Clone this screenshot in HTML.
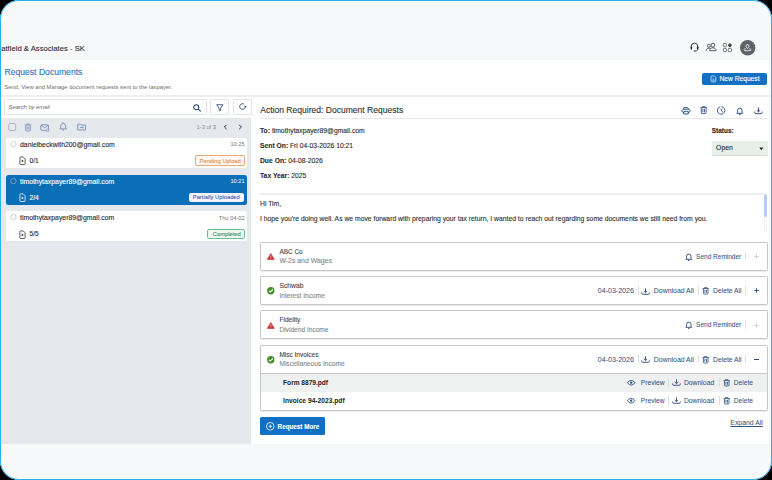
<!DOCTYPE html>
<html><head><meta charset="utf-8">
<style>
*{box-sizing:border-box;margin:0;padding:0}
html,body{width:772px;height:480px;overflow:hidden;background:#000}
body{font-family:"Liberation Sans",sans-serif;color:#2b2b2b;position:relative}
#frame{position:absolute;left:0;top:0;width:772px;height:480px;border-radius:19px;overflow:hidden;background:#f7f8fa}
#bord{position:absolute;left:0;top:0;width:772px;height:480px;border:1.5px solid #27b3e6;border-radius:19px;z-index:10}
.a{position:absolute}
.t{position:absolute;white-space:nowrap;line-height:1;-webkit-text-stroke:0.12px currentColor}
svg{position:absolute;overflow:visible}
</style></head>
<body>
<div id="frame">
<div class="t" style="left:1.2px;top:45.00px;font-size:7.7px;color:#333">atfield &amp; Associates - SK</div>
<svg style="left:689.5px;top:42px" width="10" height="10" viewBox="0 0 10 10"><path d="M1.2 6V4.4a3.3 3.3 0 0 1 6.6 0V6" fill="none" stroke="#222" stroke-width="0.85"/><rect x="0.6" y="4.6" width="1.5" height="3" rx="0.6" fill="#222"/><rect x="6.9" y="4.6" width="1.5" height="3" rx="0.6" fill="#222"/><path d="M7.7 7.4c0 1-.9 1.6-2.7 1.6" fill="none" stroke="#222" stroke-width="0.75"/><rect x="3.6" y="8.4" width="1.8" height="1.2" rx="0.5" fill="#222"/></svg>
<svg style="left:705px;top:41px" width="12" height="11" viewBox="0 0 12 11"><circle cx="3.9" cy="4.8" r="1.55" fill="none" stroke="#444" stroke-width="0.85"/><circle cx="7.9" cy="4.1" r="1.9" fill="none" stroke="#444" stroke-width="0.85"/><path d="M1.1 9.8c0-1.6 1.2-2.6 2.8-2.6.7 0 1.2.2 1.6.5" fill="none" stroke="#444" stroke-width="0.85"/><path d="M4.7 9.7c0-1.9 1.4-3 3.2-3s3.2 1.1 3.2 3z" fill="none" stroke="#444" stroke-width="0.85" stroke-linejoin="round"/></svg>
<svg style="left:722px;top:42px" width="11" height="11" viewBox="0 0 11 11"><rect x="1.3" y="1.5" width="3.2" height="3.2" rx="0.9" fill="none" stroke="#555" stroke-width="0.85"/><rect x="1.3" y="6.4" width="3.2" height="3.2" rx="0.9" fill="none" stroke="#555" stroke-width="0.85"/><rect x="6.3" y="6.4" width="3.2" height="3.2" rx="0.9" fill="none" stroke="#555" stroke-width="0.85"/><path d="M7.9 1.2l1.3.7.7 1.3-.7 1.3-1.3.7-1.3-.7-.7-1.3.7-1.3z" fill="#444"/></svg>
<svg style="left:739.9px;top:39.7px" width="15.4" height="15.4" viewBox="0 0 15.4 15.4"><circle cx="7.7" cy="7.7" r="7.7" fill="#5f6368"/><path d="M7.5 8.6C6.6 7.6 6 6.9 6 6.1a1.5 1.5 0 0 1 3 0c0 .8-.6 1.5-1.5 2.5z" fill="none" stroke="#fff" stroke-width="0.8"/><path d="M5.6 8.7c-1 .3-1.7.7-1.7 1.2 0 .5 1.6 .9 3.6 .9s3.6-.4 3.6-.9c0-.5-.7-.9-1.7-1.2" fill="none" stroke="#fff" stroke-width="0.8"/></svg>
<div class="a" style="left:0px;top:60px;width:772px;height:384px;background:#fff"></div>
<div class="t" style="left:4.5px;top:68.00px;font-size:8.6px;color:#2a78c2">Request Documents</div>
<div class="t" style="left:4.5px;top:85.00px;font-size:5.8px;color:#6b6b6b;-webkit-text-stroke:0">Send, View and Manage document requests sent to the taxpayer.</div>
<div class="a" style="left:0px;top:94.5px;width:772px;height:2px;background:#eceef1"></div>
<div class="a" style="left:702.2px;top:72.5px;width:64.8px;height:12.2px;background:#116fc4;border-radius:2px"></div>
<svg style="left:709.8px;top:75.3px" width="7" height="7.5" viewBox="0 0 7 7.5"><path d="M1.9 0.9h2.3l1.6 1.6v3.4c0 .5-.4.9-.9.9H1.9c-.5 0-.9-.4-.9-.9V1.8c0-.5.4-.9.9-.9z" fill="none" stroke="#e8f1fa" stroke-width="0.75" stroke-linejoin="round"/><path d="M2.4 4.1h2.2M2.4 5.3h2.2" stroke="#e8f1fa" stroke-width="0.6"/></svg>
<div class="t" style="left:719.4px;top:76.00px;font-size:6.7px;color:#fff">New Request</div>
<div class="a" style="left:4px;top:99px;width:203px;height:15.6px;border:1px solid #e1e5ea;background:#fff;border-radius:1px"></div>
<div class="t" style="left:8.6px;top:105.00px;font-size:5.75px;font-style:italic;color:#6a6a6a;-webkit-text-stroke:0">Search by email</div>
<svg style="left:192.5px;top:103.8px" width="10" height="8" viewBox="0 0 10 8"><circle cx="3.3" cy="3.2" r="2.5" fill="none" stroke="#1f3f6e" stroke-width="1.05"/><path d="M5.2 5.1l2.6 2.2" stroke="#1f3f6e" stroke-width="1.1"/></svg>
<div class="a" style="left:210.2px;top:99px;width:18.5px;height:15.5px;border:1px solid #e1e5ea;background:#fff;border-radius:1px"></div>
<svg style="left:216px;top:104px" width="8" height="8" viewBox="0 0 8 8"><path d="M0.7 0.7h6.2L4.5 4.3v2.2l-.7 .6-.7-.6V4.3z" fill="none" stroke="#1f3f6e" stroke-width="0.8" stroke-linejoin="round"/></svg>
<div class="a" style="left:233px;top:99px;width:18.6px;height:15.5px;border:1px solid #e1e5ea;background:#fff;border-radius:1px"></div>
<svg style="left:238.8px;top:103.3px" width="8" height="8" viewBox="0 0 8 8"><path d="M4.9 1.1A2.8 2.8 0 1 0 6.3 3.6" fill="none" stroke="#1f3f6e" stroke-width="0.85"/><path d="M5.1 3.1h2.4L6.3 4.6z" fill="#1f3f6e"/></svg>
<div class="a" style="left:0px;top:118px;width:251.3px;height:326px;background:#e5e9ee"></div>
<svg style="left:8px;top:123px" width="9" height="8" viewBox="0 0 9 8"><rect x="0.7" y="0.5" width="7" height="7" rx="1.6" fill="none" stroke="#abb0b7" stroke-width="0.9"/></svg>
<svg style="left:24px;top:123px" width="8" height="9" viewBox="0 0 8 9"><path d="M0.7 2h6.6M2.8 2V1h2.4v1M1.6 2.2v5.1c0 .4.3.7.7.7h3.4c.4 0 .7-.3.7-.7V2.2M3.2 3.4v3.2M4.8 3.4v3.2" fill="none" stroke="#7389aa" stroke-width="0.75"/></svg>
<svg style="left:40px;top:123.5px" width="10" height="8" viewBox="0 0 10 8"><rect x="0.8" y="0.8" width="7.6" height="5.6" rx="1" fill="none" stroke="#7389aa" stroke-width="0.85"/><path d="M0.9 1.2l3.7 2.7 3.7-2.7" fill="none" stroke="#7389aa" stroke-width="0.8"/><circle cx="7.6" cy="6.4" r="1.3" fill="#e3e8ed" stroke="#7389aa" stroke-width="0.7"/></svg>
<svg style="left:58.5px;top:122.3px" width="8.5" height="9.5" viewBox="0 0 8.5 9.5"><path d="M0.9 6.9c.7-.5.9-1.1.9-1.8V3.8a2.4 2.4 0 0 1 4.8 0v1.3c0 .7.2 1.3.9 1.8z" fill="none" stroke="#7389aa" stroke-width="0.85" stroke-linejoin="round"/><path d="M4.2 0.5v.9M3.4 8.1h1.6" stroke="#7389aa" stroke-width="0.9"/></svg>
<svg style="left:76.5px;top:123px" width="9.5" height="8" viewBox="0 0 9.5 8"><path d="M0.8 1.2h2.8l.8 .9h4.1v4.9H0.8z" fill="none" stroke="#7389aa" stroke-width="0.85" stroke-linejoin="round"/><path d="M3 4.5h3.2M5 3.4l1.2 1.1L5 5.6" fill="none" stroke="#7389aa" stroke-width="0.8"/></svg>
<div class="t" style="left:196.6px;top:125.00px;font-size:5.7px;color:#8a8a8a;-webkit-text-stroke:0">1-3 of 3</div>
<svg style="left:223px;top:124.2px" width="5" height="6" viewBox="0 0 5 6"><path d="M3.6 0.8L1.4 3l2.2 2.2" fill="none" stroke="#333" stroke-width="1"/></svg>
<svg style="left:237.5px;top:124.2px" width="5" height="6" viewBox="0 0 5 6"><path d="M1.2 0.8L3.4 3 1.2 5.2" fill="none" stroke="#333" stroke-width="1"/></svg>
<div class="a" style="left:6px;top:137.7px;width:240.7px;height:30.3px;background:#fff;border-radius:2.5px"></div>
<svg style="left:10px;top:140.89999999999998px" width="7" height="7" viewBox="0 0 7 7"><circle cx="3.4" cy="3.1" r="2.7" fill="none" stroke="#c0c3c7" stroke-width="0.8"/></svg>
<div class="t" style="left:20px;top:142.00px;font-size:6.87px;color:#2e2e2e">danielbeckwith200@gmail.com</div>
<div class="t" style="right:527.4px;top:142.00px;font-size:5.7px;color:#7a7a7a;-webkit-text-stroke:0">10:25</div>
<svg style="left:19.4px;top:155.6px" width="7" height="9" viewBox="0 0 7 9"><path d="M1.6 0.9h2.6l1.9 1.9v5c0 .4-.3.7-.7.7H1.6c-.4 0-.7-.3-.7-.7V1.6c0-.4.3-.7.7-.7z" fill="none" stroke="#2e2e2e" stroke-width="0.75" stroke-linejoin="round"/><path d="M2.7 3.7l2.1 1.3-2.1 1.3z" fill="#2e2e2e"/></svg>
<div class="t" style="left:29.5px;top:158.00px;font-size:6.7px;color:#2e2e2e">0/1</div>
<div class="a" style="left:195px;top:155.2px;width:50px;height:10.6px;border:1px solid #e9a878;background:#fff7f1;border-radius:2px"></div>
<div class="t" style="right:531.2px;top:159.00px;font-size:5.8px;color:#df8e4e;-webkit-text-stroke:0.1px currentColor">Pending Upload</div>
<div class="a" style="left:6px;top:174.7px;width:240.7px;height:30.3px;background:#0b6fb7;border-radius:2.5px"></div>
<svg style="left:10px;top:177.89999999999998px" width="7" height="7" viewBox="0 0 7 7"><circle cx="3.4" cy="3.1" r="2.7" fill="none" stroke="#8fa3bf" stroke-width="0.8"/></svg>
<div class="t" style="left:20px;top:179.00px;font-size:6.87px;color:#fff">timothytaxpayer89@gmail.com</div>
<div class="t" style="right:527.4px;top:179.00px;font-size:5.7px;color:#fff;-webkit-text-stroke:0">10:21</div>
<svg style="left:19.4px;top:192.6px" width="7" height="9" viewBox="0 0 7 9"><path d="M1.6 0.9h2.6l1.9 1.9v5c0 .4-.3.7-.7.7H1.6c-.4 0-.7-.3-.7-.7V1.6c0-.4.3-.7.7-.7z" fill="none" stroke="#fff" stroke-width="0.75" stroke-linejoin="round"/><path d="M2.7 3.7l2.1 1.3-2.1 1.3z" fill="#fff"/></svg>
<div class="t" style="left:29.5px;top:195.00px;font-size:6.7px;color:#fff">2/4</div>
<div class="a" style="left:188.9px;top:192.7px;width:55.1px;height:9.3px;background:#f3f4fe;border-radius:2px"></div>
<div class="t" style="right:532.2px;top:195.00px;font-size:5.8px;color:#4a5db0;-webkit-text-stroke:0.1px currentColor">Partially Uploaded</div>
<div class="a" style="left:6px;top:211.2px;width:240.7px;height:30.3px;background:#fff;border-radius:2.5px"></div>
<svg style="left:10px;top:214.39999999999998px" width="7" height="7" viewBox="0 0 7 7"><circle cx="3.4" cy="3.1" r="2.7" fill="none" stroke="#c0c3c7" stroke-width="0.8"/></svg>
<div class="t" style="left:20px;top:215.00px;font-size:6.87px;color:#2e2e2e">timothytaxpayer89@gmail.com</div>
<div class="t" style="right:527.4px;top:216.00px;font-size:5.7px;color:#7a7a7a;-webkit-text-stroke:0">Thu 04-02</div>
<svg style="left:19.4px;top:229.6px" width="7" height="9" viewBox="0 0 7 9"><path d="M1.6 0.9h2.6l1.9 1.9v5c0 .4-.3.7-.7.7H1.6c-.4 0-.7-.3-.7-.7V1.6c0-.4.3-.7.7-.7z" fill="none" stroke="#2e2e2e" stroke-width="0.75" stroke-linejoin="round"/><path d="M2.7 3.7l2.1 1.3-2.1 1.3z" fill="#2e2e2e"/></svg>
<div class="t" style="left:29.5px;top:231.00px;font-size:6.7px;color:#2e2e2e">5/5</div>
<div class="a" style="left:207.1px;top:228.7px;width:37.9px;height:10.7px;border:1px solid #72bb8f;background:#eef7f1;border-radius:2px"></div>
<div class="t" style="right:531.2px;top:232.00px;font-size:5.8px;color:#3f8e5e;-webkit-text-stroke:0.1px currentColor">Completed</div>
<div class="t" style="left:260.2px;top:106.00px;font-size:8.55px;color:#333">Action Required: Document Requests</div>
<svg style="left:681px;top:106.8px" width="10" height="8" viewBox="0 0 10 8"><path d="M2.8 2.2V0.6h3.8l.6 .6v1M2.8 5.6H2L0.7 3.9 2 2.2h6l1.3 1.7L8 5.6h-.8M2.8 4.3h4.4v2.7H2.8z" fill="none" stroke="#2a4a7c" stroke-width="0.9" stroke-linejoin="round"/></svg>
<svg style="left:700.3px;top:106.3px" width="7.5" height="8" viewBox="0 0 7.5 8"><path d="M0.4 1.7h6.6M2.4 1.7V0.6h2.6v1.1M1.3 1.9v4.9c0 .5.3.8.8.8h3.2c.5 0 .8-.3.8-.8V1.9M2.9 3.1v3.2M4.5 3.1v3.2" fill="none" stroke="#2a4a7c" stroke-width="0.85"/></svg>
<svg style="left:717.3px;top:106px" width="9" height="9" viewBox="0 0 9 9"><path d="M3.2 0.9A3.7 3.7 0 1 0 4.5 0.8" fill="none" stroke="#2a4a7c" stroke-width="0.9"/><path d="M4.3 2.6v2.2l1.5 1.2" fill="none" stroke="#2a4a7c" stroke-width="0.9"/></svg>
<svg style="left:736.3px;top:106.5px" width="7.5" height="8.5" viewBox="0 0 7.5 8.5"><path d="M0.8 6.3h6l-.8-1V3.3a2.2 2.2 0 0 0-4.4 0v2z" fill="none" stroke="#2a4a7c" stroke-width="0.95" stroke-linejoin="round"/><path d="M3 7.4h1.6" stroke="#2a4a7c" stroke-width="1"/></svg>
<svg style="left:753.5px;top:106.8px" width="9" height="7.5" viewBox="0 0 9 7.5"><path d="M4.5 0.5v4.2M2.8 3.2l1.7 1.6 1.7-1.6" fill="none" stroke="#2a4a7c" stroke-width="0.95"/><path d="M0.8 4.6v1.1c0 .6.4 1 1 1h5.4c.6 0 1-.4 1-1V4.6" fill="none" stroke="#2a4a7c" stroke-width="0.95"/></svg>
<div class="a" style="left:260px;top:117.5px;width:507px;height:1.5px;background:#e6e8ec"></div>
<div class="t" style="left:260px;top:128.00px;font-size:6.75px;color:#2e2e2e"><b>To:</b> timothytaxpayer89@gmail.com</div>
<div class="t" style="left:260px;top:143.00px;font-size:6.75px;color:#2e2e2e"><b>Sent On:</b> Fri 04-03-2026 10:21</div>
<div class="t" style="left:260px;top:158.00px;font-size:6.75px;color:#2e2e2e"><b>Due On:</b> 04-08-2026</div>
<div class="t" style="left:260px;top:173.00px;font-size:6.75px;color:#2e2e2e"><b>Tax Year:</b> 2025</div>
<div class="t" style="left:711.8px;top:128.00px;font-size:6.45px;font-weight:bold;color:#222">Status:</div>
<div class="a" style="left:711.6px;top:140.8px;width:56.2px;height:14.8px;background:#e7efe9;border-bottom:0.8px solid #d5dbd6;border-radius:1px"></div>
<div class="t" style="left:716.1px;top:145.00px;font-size:6.8px;color:#2a2a2a">Open</div>
<svg style="left:758.8px;top:146.6px" width="5" height="4" viewBox="0 0 5 4"><path d="M0.3 0.4h4l-2 2.8z" fill="#222"/></svg>
<div class="a" style="left:260px;top:192.8px;width:503.7px;height:2.2px;background:#eceef0"></div>
<div class="t" style="left:260px;top:201.00px;font-size:6.8px;color:#333">Hi Tim,</div>
<div class="t" style="left:260px;top:216.00px;font-size:6.8px;color:#333">I hope you're doing well. As we move forward with preparing your tax return, I wanted to reach out regarding some documents we still need from you.</div>
<div class="a" style="left:763.7px;top:193.7px;width:3.2px;height:23.2px;background:#b7cef3;border-radius:2px"></div>
<div class="a" style="left:763.7px;top:217px;width:3.2px;height:14px;border:0.5px solid #f0f1f3;border-radius:2px"></div>
<div class="a" style="left:259.7px;top:241.6px;width:508.5px;height:29.2px;border:1px solid #c5c7ca;border-radius:1.5px;background:#fff;box-shadow:0 0.5px 0.8px rgba(0,0,0,.08)"></div>
<div class="a" style="left:259.7px;top:275.9px;width:508.5px;height:29.2px;border:1px solid #c5c7ca;border-radius:1.5px;background:#fff;box-shadow:0 0.5px 0.8px rgba(0,0,0,.08)"></div>
<div class="a" style="left:259.7px;top:310.3px;width:508.5px;height:29.2px;border:1px solid #c5c7ca;border-radius:1.5px;background:#fff;box-shadow:0 0.5px 0.8px rgba(0,0,0,.08)"></div>
<div class="a" style="left:259.7px;top:344.7px;width:508.5px;height:66.1px;border:1px solid #c5c7ca;border-radius:1.5px;background:#fff;box-shadow:0 0.5px 0.8px rgba(0,0,0,.08)"></div>
<div class="a" style="left:260.7px;top:372.7px;width:506.5px;height:19px;background:#eff0f0;border-top:1px solid #c5c7ca"></div>
<svg style="left:266.8px;top:253.2px" width="8" height="7" viewBox="0 0 8 7"><path d="M3.8 0.5L7.3 6.4H0.3z" fill="#c92a2a" stroke="#c92a2a" stroke-width="0.6" stroke-linejoin="round"/><path d="M3.8 2.4v2M3.8 4.9v.6" stroke="#fff" stroke-width="0.75"/></svg>
<div class="t" style="left:279.4px;top:249.00px;font-size:6.45px;color:#4a4a4a">ABC Co</div>
<div class="t" style="left:279.4px;top:258.00px;font-size:6.9px;color:#8a8a8a">W-2s and Wages</div>
<svg style="left:266.8px;top:287.4px" width="8" height="8" viewBox="0 0 8 8"><circle cx="3.8" cy="3.8" r="3.7" fill="#4a8c2a"/><path d="M1.9 3.8l1.4 1.3 2.5-2.6" fill="none" stroke="#fff" stroke-width="1.1"/></svg>
<div class="t" style="left:279.4px;top:283.00px;font-size:6.75px;color:#4a4a4a">Schwab</div>
<div class="t" style="left:279.4px;top:293.00px;font-size:6.6px;color:#8a8a8a">Interest Income</div>
<svg style="left:266.8px;top:321.90000000000003px" width="8" height="7" viewBox="0 0 8 7"><path d="M3.8 0.5L7.3 6.4H0.3z" fill="#c92a2a" stroke="#c92a2a" stroke-width="0.6" stroke-linejoin="round"/><path d="M3.8 2.4v2M3.8 4.9v.6" stroke="#fff" stroke-width="0.75"/></svg>
<div class="t" style="left:279.4px;top:317.00px;font-size:6.6px;color:#4a4a4a">Fidelity</div>
<div class="t" style="left:279.4px;top:327.00px;font-size:6.6px;color:#8a8a8a">Dividend Income</div>
<svg style="left:266.8px;top:356.2px" width="8" height="8" viewBox="0 0 8 8"><circle cx="3.8" cy="3.8" r="3.7" fill="#4a8c2a"/><path d="M1.9 3.8l1.4 1.3 2.5-2.6" fill="none" stroke="#fff" stroke-width="1.1"/></svg>
<div class="t" style="left:279.4px;top:352.00px;font-size:6.5px;color:#4a4a4a">Misc Invoices</div>
<div class="t" style="left:279.4px;top:361.00px;font-size:6.6px;color:#8a8a8a">Miscellaneous Income</div>
<svg style="left:685px;top:252.6px" width="7.5" height="8.5" viewBox="0 0 7.5 8.5"><path d="M0.8 6.3h6l-.8-1V3.3a2.2 2.2 0 0 0-4.4 0v2z" fill="none" stroke="#2a4a7c" stroke-width="0.9" stroke-linejoin="round"/><path d="M3 7.4h1.6" stroke="#2a4a7c" stroke-width="0.9"/></svg>
<div class="t" style="left:696.1px;top:254.00px;font-size:6.5px;color:#34507e;-webkit-text-stroke:0.04px currentColor">Send Reminder</div>
<div class="a" style="left:745.3px;top:251.6px;width:0.9px;height:8.8px;background:#dde1e6"></div>
<svg style="left:753px;top:253.1px" width="7" height="7" viewBox="0 0 7 7"><path d="M3.5 1.2v4.6M1.2 3.5h4.6" stroke="#c8ccd2" stroke-width="0.9"/></svg>
<div class="t" style="left:597.8px;top:287.00px;font-size:7.05px;color:#34507e;-webkit-text-stroke:0.04px currentColor">04-03-2026</div>
<div class="a" style="left:637.6px;top:285.9px;width:0.9px;height:8.8px;background:#dde1e6"></div>
<svg style="left:641.2px;top:287.59999999999997px" width="9" height="7" viewBox="0 0 9 7"><path d="M4.5 0.3v4.2M2.8 3l1.7 1.6 1.7-1.6" fill="none" stroke="#2a4a7c" stroke-width="0.9"/><path d="M0.7 4.4v.9c0 .6.4 1 1 1h5.6c.6 0 1-.4 1-1v-.9" fill="none" stroke="#2a4a7c" stroke-width="0.9"/></svg>
<div class="t" style="left:653.8px;top:288.00px;font-size:6.93px;color:#34507e;-webkit-text-stroke:0.04px currentColor">Download All</div>
<div class="a" style="left:697.5px;top:285.9px;width:0.9px;height:8.8px;background:#dde1e6"></div>
<svg style="left:701.8px;top:287.2px" width="7.5" height="7.5" viewBox="0 0 7.5 7.5"><path d="M0.5 1.6h6.4M2.5 1.6V0.6h2.4v1M1.4 1.8v4.5c0 .4.3.7.7.7h3.2c.4 0 .7-.3.7-.7V1.8M2.9 2.9v2.9M4.5 2.9v2.9" fill="none" stroke="#2a4a7c" stroke-width="0.8"/></svg>
<div class="t" style="left:713.1px;top:288.00px;font-size:6.75px;color:#34507e;-webkit-text-stroke:0.04px currentColor">Delete All</div>
<div class="a" style="left:745.3px;top:285.9px;width:0.9px;height:8.8px;background:#dde1e6"></div>
<svg style="left:753px;top:287.4px" width="7" height="7" viewBox="0 0 7 7"><path d="M3.5 1.2v4.6M1.2 3.5h4.6" stroke="#2a4a7c" stroke-width="0.9"/></svg>
<svg style="left:685px;top:321.3px" width="7.5" height="8.5" viewBox="0 0 7.5 8.5"><path d="M0.8 6.3h6l-.8-1V3.3a2.2 2.2 0 0 0-4.4 0v2z" fill="none" stroke="#2a4a7c" stroke-width="0.9" stroke-linejoin="round"/><path d="M3 7.4h1.6" stroke="#2a4a7c" stroke-width="0.9"/></svg>
<div class="t" style="left:696.1px;top:322.00px;font-size:6.5px;color:#34507e;-webkit-text-stroke:0.04px currentColor">Send Reminder</div>
<div class="a" style="left:745.3px;top:320.3px;width:0.9px;height:8.8px;background:#dde1e6"></div>
<svg style="left:753px;top:321.8px" width="7" height="7" viewBox="0 0 7 7"><path d="M3.5 1.2v4.6M1.2 3.5h4.6" stroke="#c8ccd2" stroke-width="0.9"/></svg>
<div class="t" style="left:597.8px;top:356.00px;font-size:7.05px;color:#34507e;-webkit-text-stroke:0.04px currentColor">04-03-2026</div>
<div class="a" style="left:637.6px;top:354.7px;width:0.9px;height:8.8px;background:#dde1e6"></div>
<svg style="left:641.2px;top:356.4px" width="9" height="7" viewBox="0 0 9 7"><path d="M4.5 0.3v4.2M2.8 3l1.7 1.6 1.7-1.6" fill="none" stroke="#2a4a7c" stroke-width="0.9"/><path d="M0.7 4.4v.9c0 .6.4 1 1 1h5.6c.6 0 1-.4 1-1v-.9" fill="none" stroke="#2a4a7c" stroke-width="0.9"/></svg>
<div class="t" style="left:653.8px;top:357.00px;font-size:6.93px;color:#34507e;-webkit-text-stroke:0.04px currentColor">Download All</div>
<div class="a" style="left:697.5px;top:354.7px;width:0.9px;height:8.8px;background:#dde1e6"></div>
<svg style="left:701.8px;top:356.0px" width="7.5" height="7.5" viewBox="0 0 7.5 7.5"><path d="M0.5 1.6h6.4M2.5 1.6V0.6h2.4v1M1.4 1.8v4.5c0 .4.3.7.7.7h3.2c.4 0 .7-.3.7-.7V1.8M2.9 2.9v2.9M4.5 2.9v2.9" fill="none" stroke="#2a4a7c" stroke-width="0.8"/></svg>
<div class="t" style="left:713.1px;top:357.00px;font-size:6.75px;color:#34507e;-webkit-text-stroke:0.04px currentColor">Delete All</div>
<div class="a" style="left:745.3px;top:354.7px;width:0.9px;height:8.8px;background:#dde1e6"></div>
<div class="a" style="left:754.2px;top:359.3px;width:4.6px;height:0.9px;background:#2a4a7c"></div>
<div class="t" style="left:283.1px;top:380.00px;font-size:6.58px;font-weight:bold;color:#222;-webkit-text-stroke:0">Form 8879.pdf</div>
<div class="t" style="left:283.1px;top:398.00px;font-size:6.68px;font-weight:bold;color:#222;-webkit-text-stroke:0">Invoice 94-2023.pdf</div>
<svg style="left:627.3px;top:380.0px" width="8.5" height="5.5" viewBox="0 0 8.5 5.5"><path d="M0.5 2.7C1.5 1.2 2.8 .5 4.2 .5s2.7.7 3.7 2.2C6.9 4.2 5.6 5 4.2 5S1.5 4.2.5 2.7z" fill="none" stroke="#2a4a7c" stroke-width="0.9"/><circle cx="4.2" cy="2.7" r="1.1" fill="#2a4a7c"/></svg>
<div class="t" style="left:640.8px;top:380.00px;font-size:6.66px;color:#34507e;-webkit-text-stroke:0.04px currentColor">Preview</div>
<div class="a" style="left:668.2px;top:378.0px;width:0.9px;height:8.8px;background:#dde1e6"></div>
<svg style="left:671.8px;top:379.3px" width="9" height="7" viewBox="0 0 9 7"><path d="M4.5 0.3v4.2M2.8 3l1.7 1.6 1.7-1.6" fill="none" stroke="#2a4a7c" stroke-width="0.9"/><path d="M0.7 4.4v.9c0 .6.4 1 1 1h5.6c.6 0 1-.4 1-1v-.9" fill="none" stroke="#2a4a7c" stroke-width="0.9"/></svg>
<div class="t" style="left:683.9px;top:380.00px;font-size:6.84px;color:#34507e;-webkit-text-stroke:0.04px currentColor">Download</div>
<div class="a" style="left:718.5px;top:378.0px;width:0.9px;height:8.8px;background:#dde1e6"></div>
<svg style="left:722.5px;top:379.2px" width="7.5" height="7.5" viewBox="0 0 7.5 7.5"><path d="M0.5 1.6h6.4M2.5 1.6V0.6h2.4v1M1.4 1.8v4.5c0 .4.3.7.7.7h3.2c.4 0 .7-.3.7-.7V1.8M2.9 2.9v2.9M4.5 2.9v2.9" fill="none" stroke="#2a4a7c" stroke-width="0.8"/></svg>
<div class="t" style="left:733.8px;top:380.00px;font-size:6.68px;color:#34507e;-webkit-text-stroke:0.04px currentColor">Delete</div>
<svg style="left:627.3px;top:398.1px" width="8.5" height="5.5" viewBox="0 0 8.5 5.5"><path d="M0.5 2.7C1.5 1.2 2.8 .5 4.2 .5s2.7.7 3.7 2.2C6.9 4.2 5.6 5 4.2 5S1.5 4.2.5 2.7z" fill="none" stroke="#2a4a7c" stroke-width="0.9"/><circle cx="4.2" cy="2.7" r="1.1" fill="#2a4a7c"/></svg>
<div class="t" style="left:640.8px;top:398.00px;font-size:6.66px;color:#34507e;-webkit-text-stroke:0.04px currentColor">Preview</div>
<div class="a" style="left:668.2px;top:396.1px;width:0.9px;height:8.8px;background:#dde1e6"></div>
<svg style="left:671.8px;top:397.40000000000003px" width="9" height="7" viewBox="0 0 9 7"><path d="M4.5 0.3v4.2M2.8 3l1.7 1.6 1.7-1.6" fill="none" stroke="#2a4a7c" stroke-width="0.9"/><path d="M0.7 4.4v.9c0 .6.4 1 1 1h5.6c.6 0 1-.4 1-1v-.9" fill="none" stroke="#2a4a7c" stroke-width="0.9"/></svg>
<div class="t" style="left:683.9px;top:398.00px;font-size:6.84px;color:#34507e;-webkit-text-stroke:0.04px currentColor">Download</div>
<div class="a" style="left:718.5px;top:396.1px;width:0.9px;height:8.8px;background:#dde1e6"></div>
<svg style="left:722.5px;top:397.3px" width="7.5" height="7.5" viewBox="0 0 7.5 7.5"><path d="M0.5 1.6h6.4M2.5 1.6V0.6h2.4v1M1.4 1.8v4.5c0 .4.3.7.7.7h3.2c.4 0 .7-.3.7-.7V1.8M2.9 2.9v2.9M4.5 2.9v2.9" fill="none" stroke="#2a4a7c" stroke-width="0.8"/></svg>
<div class="t" style="left:733.8px;top:398.00px;font-size:6.68px;color:#34507e;-webkit-text-stroke:0.04px currentColor">Delete</div>
<div class="a" style="left:260px;top:417.3px;width:65px;height:17.4px;background:#1270c4;border-radius:1.5px"></div>
<svg style="left:265.5px;top:421.8px" width="9" height="9" viewBox="0 0 9 9"><circle cx="4.3" cy="4.3" r="3.8" fill="none" stroke="#fff" stroke-width="0.8"/><path d="M4.3 2.6v3.4M2.6 4.3h3.4" stroke="#fff" stroke-width="0.8"/></svg>
<div class="t" style="left:277.6px;top:424.00px;font-size:6.31px;font-weight:bold;color:#fff">Request More</div>
<div class="t" style="left:730.3px;top:420.00px;font-size:6.88px;color:#34507e;-webkit-text-stroke:0.04px currentColor;text-decoration:underline">Expand All</div>
</div>
<div id="bord"></div>
</body></html>
